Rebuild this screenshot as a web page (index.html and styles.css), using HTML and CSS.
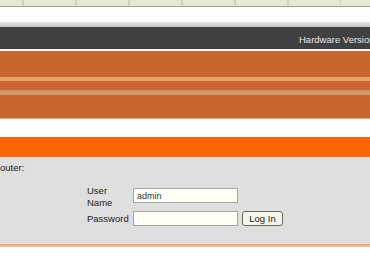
FILE: index.html
```html
<!DOCTYPE html>
<html lang="en">
<head>
    <meta charset="UTF-8">
    <title>Login</title>
    <link rel="stylesheet" href="styles.css">
</head>
<body>
    <div class="topline"></div>
    <div class="shade"></div>
    <div class="statusbar">
        <span class="hwver">Hardware Version: A1</span>
    </div>
    <div class="banner">
        <div class="band band-light"></div>
        <div class="band band-tan"></div>
    </div>
    <div class="titlebar"></div>
    <div class="panel">
        <p class="intro">outer:</p>
        <form class="login">
            <label class="lbl" for="user">User Name</label>
            <input class="field field-top" id="user" type="text" value="admin">
            <span></span>
            <label class="lbl" for="pass">Password</label>
            <input class="field" id="pass" type="password">
            <button class="btn" type="button">Log In</button>
        </form>
    </div>
    <div class="footline"></div>
</body>
</html>
```

FILE: styles.css
```css
* {
    margin: 0;
    padding: 0;
    box-sizing: border-box;
}

body {
    font-family: 'Liberation Sans', Tahoma, sans-serif;
    font-size: 10px;
    background: #ffffff;
    color: #1e1e1e;
    width: 370px;
    overflow: hidden;
}

.topline {
    height: 7px;
    background: repeating-linear-gradient(90deg, #e9e7d4 0, #e9e7d4 51px, #d6d2b8 51px, #d6d2b8 53px);
    background-position: -29px 0;
    border-bottom: 1px solid #a9a67e;
    margin-bottom: 15px;
}

.shade {
    height: 5px;
    background: linear-gradient(#e4e4e4, #c4c4c4);
}

.statusbar {
    height: 24px;
    background: #404040;
    color: #e6e6e6;
    display: flex;
    align-items: center;
    padding-left: 299px;
    white-space: nowrap;
    overflow: hidden;
    border-bottom: 2px solid #ffffff;
}

.hwver {
    font-size: 9.5px;
    padding-top: 2px;
}

.banner {
    height: 68px;
    background: #c9652f;
    padding-top: 26px;
    border-bottom: 1px solid #e9a27c;
    margin-bottom: 18px;
}

.band {
    height: 4px;
}

.band-light {
    background: #e6a069;
}

.band-tan {
    height: 5px;
    margin-top: 9px;
    background: #d29a6b;
}

.titlebar {
    height: 20px;
    background: #ff6600;
}

.panel {
    height: 87px;
    background: #dfdfdf;
    padding-top: 5px;
}

.intro {
    line-height: 12px;
    font-size: 9.5px;
}

.login {
    display: grid;
    grid-template-columns: 42px 105px auto;
    column-gap: 4px;
    row-gap: 2px;
    margin: 11px 0 0 87px;
    width: fit-content;
}

.lbl {
    font-size: 9.5px;
    line-height: 12px;
    align-self: center;
}

.field {
    width: 105px;
    height: 15px;
    border: 1px solid #a5a5a0;
    background: #fffff8;
    font-family: inherit;
    font-size: 9px;
    padding: 0 3px;
    color: #333333;
    align-self: center;
}

.field-top {
    align-self: start;
    margin-top: 3px;
}

.btn {
    width: 41px;
    height: 15px;
    border: 1px solid #5f6f55;
    border-radius: 3px;
    background: #f6f6ee;
    font-family: inherit;
    font-size: 9.5px;
    color: #222222;
    align-self: center;
}

.footline {
    height: 3px;
    background: linear-gradient(#f09a68, #f8c8a8);
}
```
